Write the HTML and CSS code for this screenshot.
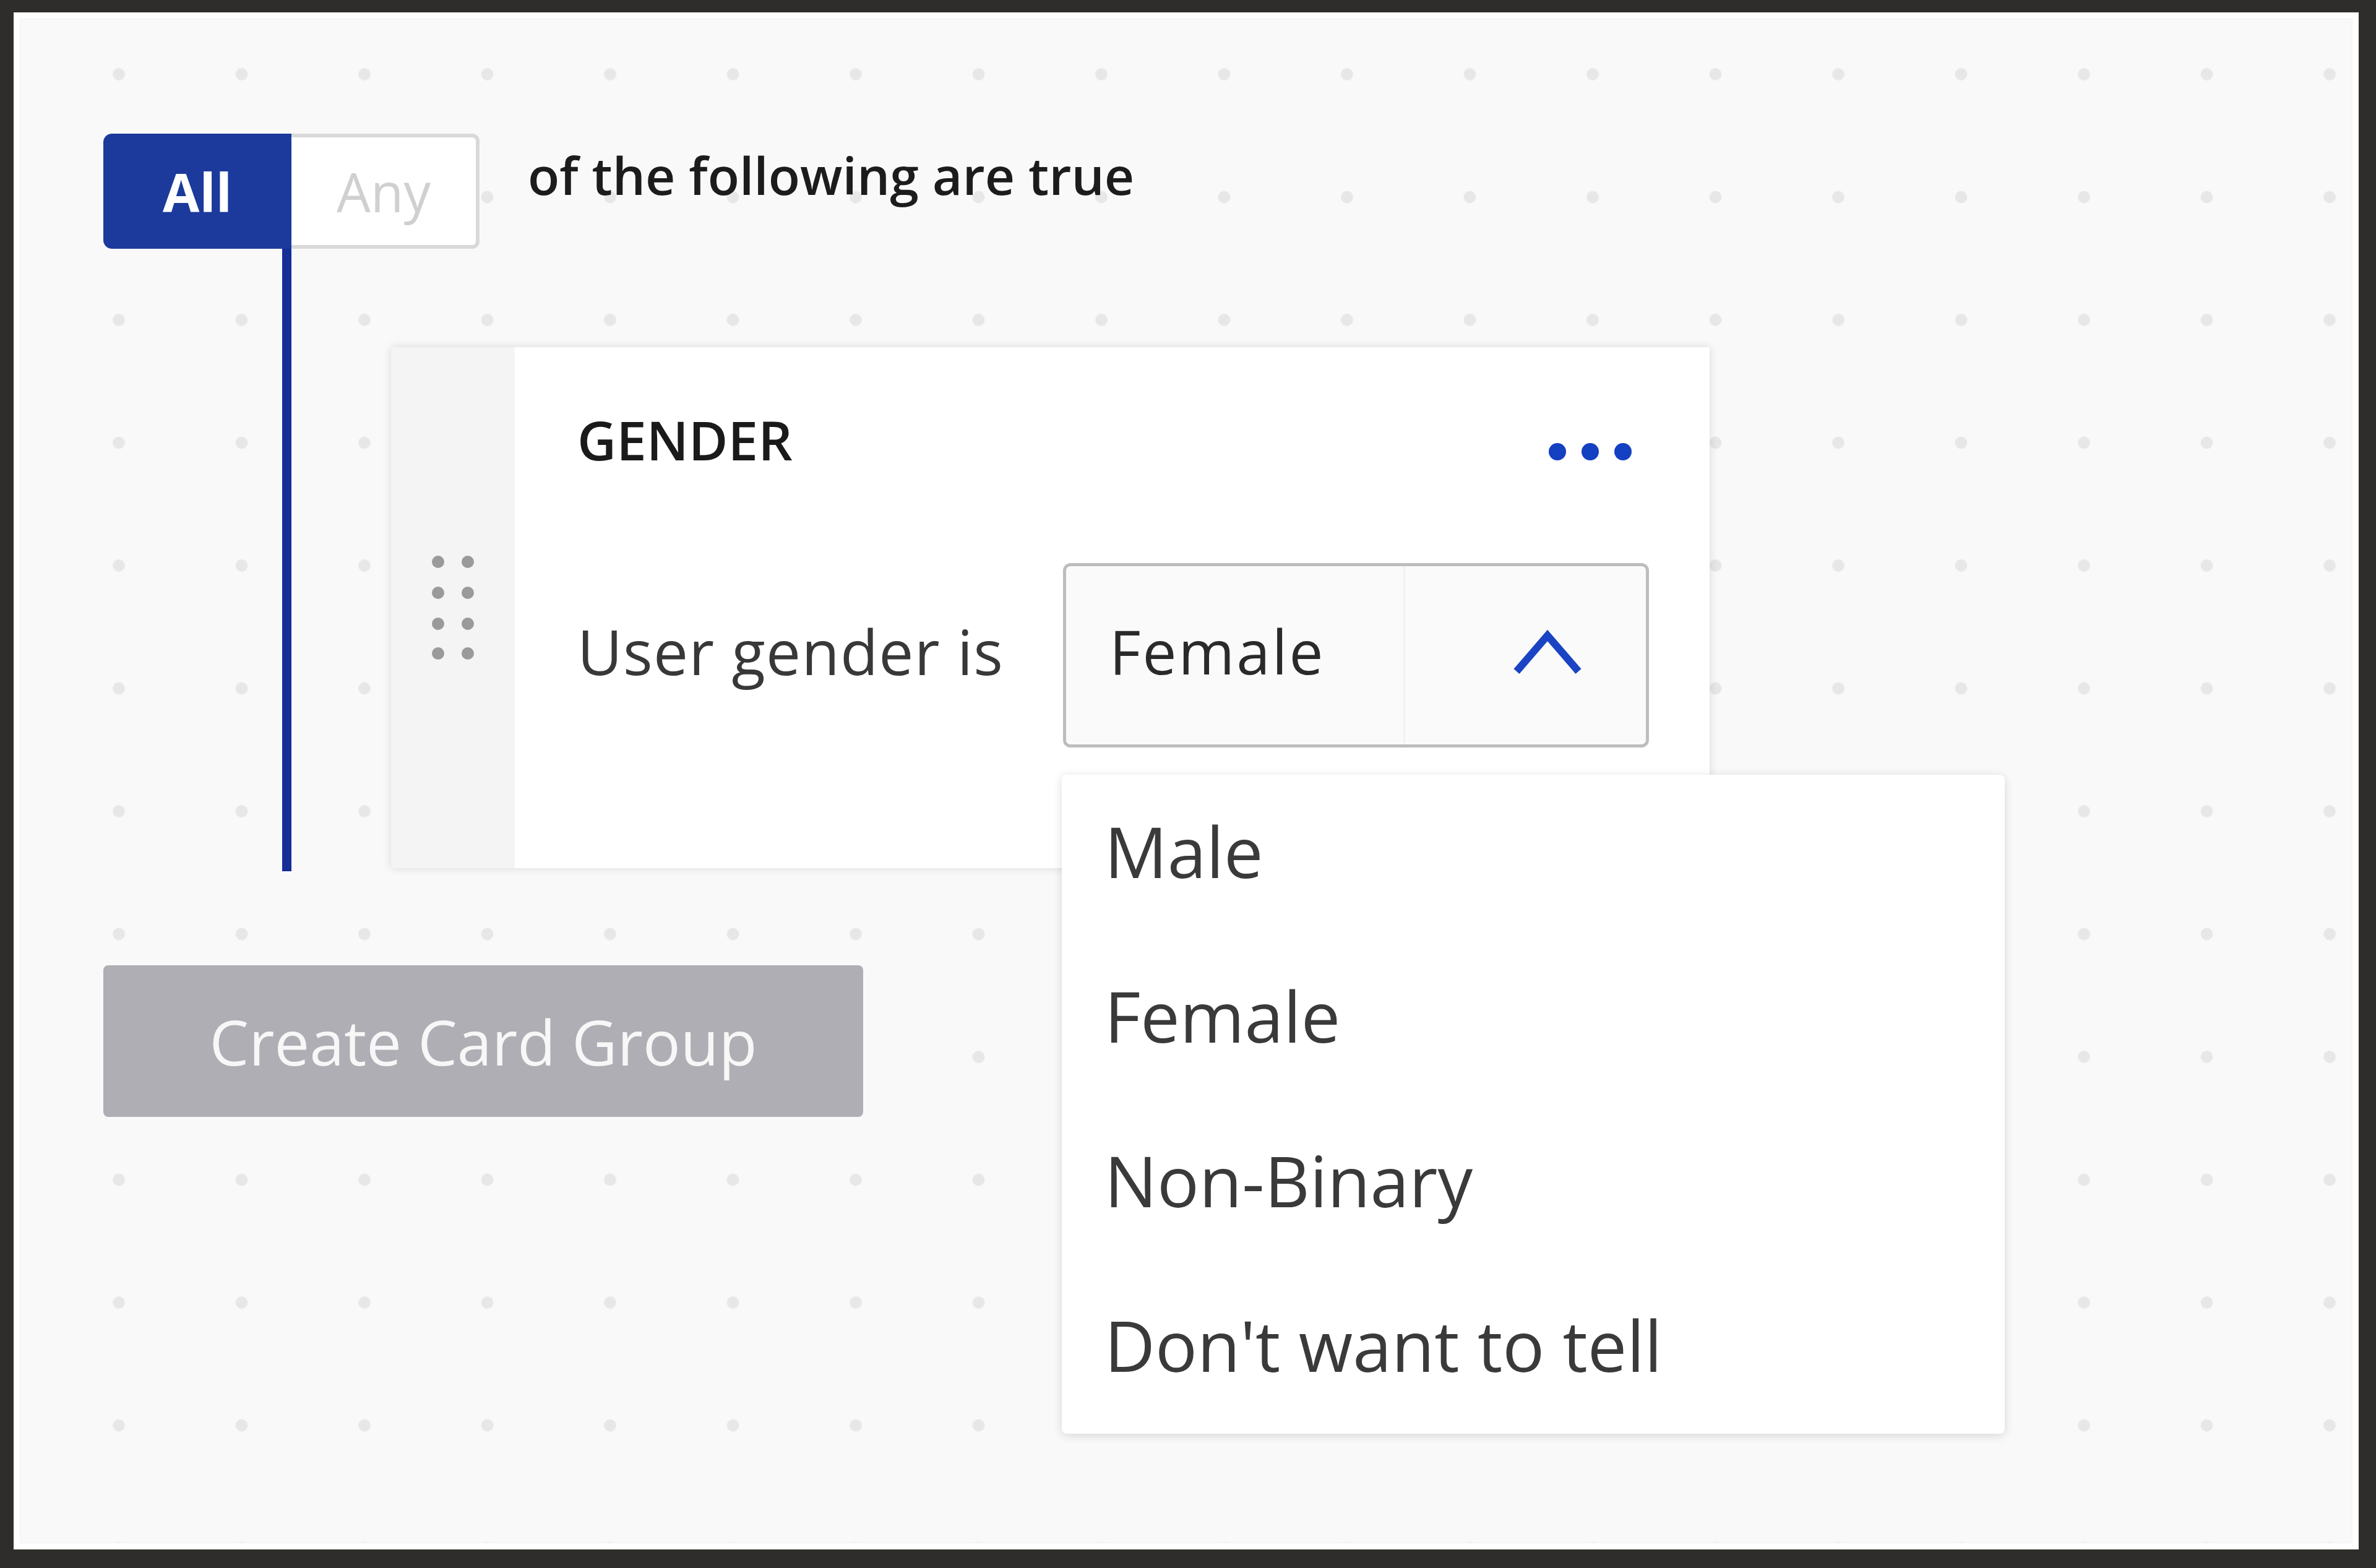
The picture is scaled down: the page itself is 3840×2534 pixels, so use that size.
FILE: index.html
```html
<!DOCTYPE html>
<html lang="en">
<head>
<meta charset="utf-8">
<title>Card Group Builder</title>
<link rel="stylesheet" href="styles.css">
</head>
<body>
<div class="panel">
  <div class="builder">
    <div class="group">
      <div class="header-row">
        <div class="toggle">
          <span class="opt opt-active">All</span>
          <span class="opt opt-idle">Any</span>
        </div>
        <span class="header-text">of the following are true</span>
      </div>
      <div class="group-body">
        <div class="rail"></div>
        <div class="card">
          <div class="handle">
            <svg width="68" height="168" viewBox="0 0 68 168" aria-hidden="true">
              <g fill="#9a9a9a">
                <circle cx="10" cy="10" r="10"/><circle cx="58" cy="10" r="10"/>
                <circle cx="10" cy="60" r="10"/><circle cx="58" cy="60" r="10"/>
                <circle cx="10" cy="110" r="10"/><circle cx="58" cy="110" r="10"/>
                <circle cx="10" cy="158" r="10"/><circle cx="58" cy="158" r="10"/>
              </g>
            </svg>
          </div>
          <div class="card-content">
            <div class="card-head">
              <span class="card-title">GENDER</span>
              <svg class="more" width="134" height="28" viewBox="0 0 134 28" aria-hidden="true">
                <g fill="#1440c2">
                  <circle cx="14" cy="14" r="14"/><circle cx="67" cy="14" r="14"/><circle cx="120" cy="14" r="14"/>
                </g>
              </svg>
            </div>
            <div class="cond-row">
              <span class="cond-label">User gender is</span>
              <div class="select">
                <span class="select-value">Female</span>
                <span class="select-btn">
                  <svg width="112" height="74" viewBox="0 0 112 74" aria-hidden="true">
                    <polyline points="6,67 56,9 106,67" fill="none" stroke="#1a44c4" stroke-width="12" stroke-linejoin="miter"/>
                  </svg>
                </span>
                <ul class="menu">
                  <li class="menu-item">Male</li>
                  <li class="menu-item">Female</li>
                  <li class="menu-item">Non-Binary</li>
                  <li class="menu-item">Don't want to tell</li>
                </ul>
              </div>
            </div>
          </div>
        </div>
      </div>
    </div>
    <button class="create-btn" type="button">Create Card Group</button>
  </div>
</div>
</body>
</html>
```

FILE: styles.css
```css
html, body {
  height: 100%;
  margin: 0;
}

body {
  box-sizing: border-box;
  padding: 20px 28px 30px 22px;
  background: #2f2d2b;
  font-family: "Open Sans", "Liberation Sans", sans-serif;
  overflow: hidden;
}

.panel {
  box-sizing: border-box;
  height: 100%;
  border: 10px solid #ffffff;
  background-color: #f9f9f9;
  background-image: radial-gradient(circle, #e7e7e7 9px, rgba(231, 231, 231, 0) 10.5px);
  background-size: 198.5px 198.5px;
  background-position: 60.75px -9.25px;
  padding: 186px 0 0 135px;
  box-shadow: inset 0 0 0 1px #f2f2f2;
}

.builder {
  display: flex;
  flex-direction: column;
  align-items: flex-start;
}

/* header row */
.header-row {
  display: flex;
  align-items: flex-start;
}

.toggle {
  display: flex;
}

.opt {
  box-sizing: border-box;
  width: 304px;
  height: 186px;
  display: flex;
  align-items: center;
  justify-content: center;
}

.opt-active {
  background: #1b3a9c;
  color: #ffffff;
  font-weight: 700;
  font-size: 86px;
  border-radius: 14px 0 0 14px;
}

.opt-idle {
  background: #ffffff;
  color: #d0d0d0;
  font-size: 87px;
  border: 6px solid #d9d9d9;
  border-left: none;
  border-radius: 0 12px 12px 0;
}

.header-text {
  margin: 17px 0 0 78px;
  font-size: 84px;
  line-height: 100.8px;
  font-weight: 600;
  color: #1c1c1c;
}

/* group body */
.group-body {
  display: flex;
  align-items: stretch;
}

.rail {
  width: 15px;
  margin-left: 289px;
  background: #142f96;
}

.card {
  box-sizing: border-box;
  width: 2131px;
  margin: 159px 0 5px 161px;
  display: flex;
  background: #ffffff;
  box-shadow: 0 0 14px rgba(0, 0, 0, 0.13);
}

.handle {
  width: 200px;
  flex: none;
  background: #f4f4f4;
  display: flex;
  align-items: center;
  justify-content: center;
}

.card-content {
  flex: 1;
  padding: 96px 97px 195px 101px;
  display: flex;
  flex-direction: column;
}

.card-head {
  display: flex;
  justify-content: space-between;
  align-items: flex-start;
}

.card-title {
  font-size: 87px;
  line-height: 107px;
  font-weight: 600;
  color: #1a1a1a;
}

.more {
  margin: 59px 29px 0 0;
}

.cond-row {
  margin-top: 146px;
  display: flex;
  align-items: center;
}

.cond-label {
  width: 785px;
  flex: none;
  font-size: 100px;
  line-height: 120px;
  letter-spacing: 1.2px;
  color: #383838;
  padding-bottom: 14px;
}

.select {
  position: relative;
  box-sizing: border-box;
  width: 947px;
  height: 298px;
  border: 5px solid #bdbdbd;
  border-radius: 12px;
  background: #fafafa;
  display: flex;
  align-items: center;
  padding-left: 70px;
}

.select-value {
  font-size: 98px;
  line-height: 118px;
  letter-spacing: 3px;
  color: #2a2a2a;
  padding-bottom: 14px;
}

.select-btn {
  box-sizing: border-box;
  margin-left: auto;
  width: 392px;
  height: 100%;
  border-left: 3px solid #f2f2f2;
  display: flex;
  align-items: center;
  justify-content: flex-end;
  padding-right: 103px;
}

.select-btn svg {
  margin-bottom: 8px;
}

/* dropdown menu */
.menu {
  position: absolute;
  z-index: 5;
  top: 337px;
  left: -7px;
  box-sizing: border-box;
  width: 1524px;
  height: 1065px;
  margin: 0;
  padding: 0;
  list-style: none;
  background: #ffffff;
  border-radius: 8px;
  box-shadow: 0 3px 16px rgba(0, 0, 0, 0.14);
}

.menu-item {
  padding: 0 0 20px 69px;
  height: 246px;
  font-size: 113px;
  line-height: 246px;
  color: #3a3a3a;
}

/* button */
.create-btn {
  margin-top: 152px;
  width: 1228px;
  height: 245px;
  border: none;
  border-radius: 8px;
  background: #aeaeb4;
  color: #f7f7f7;
  font-family: "Open Sans", "Liberation Sans", sans-serif;
  font-size: 101px;
  padding: 0;
}
```
